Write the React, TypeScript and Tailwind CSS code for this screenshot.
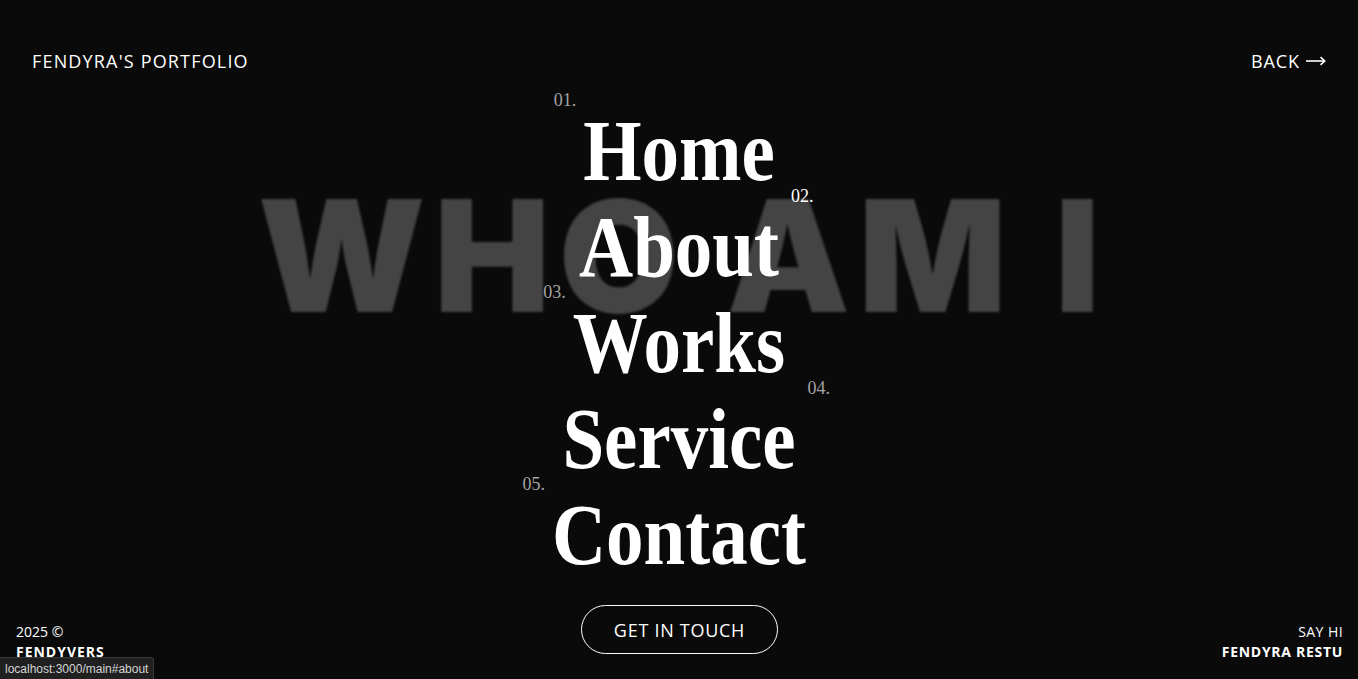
import React from 'react';

const links = [
  { n: '01.', label: 'Home', side: 'left' },
  { n: '02.', label: 'About', side: 'right', active: true },
  { n: '03.', label: 'Works', side: 'left' },
  { n: '04.', label: 'Service', side: 'right' },
  { n: '05.', label: 'Contact', side: 'left' },
];

export default function App() {
  return (
    <div className="relative flex h-screen w-full flex-col overflow-hidden bg-[#0a0a0a] text-white font-['Open_Sans',sans-serif]">
      {/* big backdrop word */}
      <div className="pointer-events-none absolute inset-x-0 top-[178px] select-none pl-[8px] text-center font-['Inter',sans-serif] text-[155px] font-black leading-none tracking-[0.055em] text-[#444444] blur-[1px]">
        WHO AM I
      </div>

      <header className="relative z-10 flex items-center justify-between px-8 pt-[49px] text-[18px] leading-6">
        <a href="#" className="tracking-[0.065em]">FENDYRA'S PORTFOLIO</a>
        <a href="#" className="flex items-center gap-[6px] tracking-[0.05em]">
          BACK
          <svg width="20" height="10" viewBox="0 0 20 10" fill="none" stroke="currentColor" strokeWidth="1.6">
            <path d="M0 5h18.5" />
            <path d="M14.5 1.2L18.7 5l-4.2 3.8" />
          </svg>
        </a>
      </header>

      <nav className="relative z-10 mt-[30px] flex flex-col items-center font-['Liberation_Serif',serif]">
        {links.map((l) => (
          <a
            key={l.label}
            href={'#' + l.label.toLowerCase()}
            className="relative inline-block h-[96px] leading-[96px]"
          >
            <span className="inline-block scale-y-[1.15] text-[75px] font-bold">{l.label}</span>
            <span
              className={
                'absolute top-[-13px] text-[18px] leading-[20px] ' +
                (l.side === 'left' ? 'right-full mr-[7px] ' : 'left-full ml-[12px] ') +
                (l.active ? 'text-white' : 'text-[#a3a3a3]')
              }
            >
              {l.n}
            </span>
          </a>
        ))}
      </nav>

      <footer className="relative z-10 mt-auto grid grid-cols-3 items-end pl-4 pr-[15px] pb-[17px] text-[14px] leading-5">
        <div className="justify-self-start">
          <div>2025 ©</div>
          <div className="font-bold tracking-[0.07em]">FENDYVERS</div>
        </div>
        <a
          href="#contact"
          className="mb-[8px] flex h-[49px] w-[197px] items-center justify-center justify-self-center rounded-full border border-white text-[18px] tracking-[0.04em]"
        >
          GET IN TOUCH
        </a>
        <div className="justify-self-end text-right">
          <div className="tracking-[0.03em]">SAY HI</div>
          <div className="font-bold tracking-[0.05em]">FENDYRA RESTU</div>
        </div>
      </footer>

      <div className="absolute bottom-0 left-0 z-20 flex h-[22px] items-center rounded-tr-[4px] border-t border-r border-[#3a3a3a] bg-[#202020] px-[5px] font-['Liberation_Sans',sans-serif] text-[12px] text-[#d4d4d4]">
        localhost:3000/main#about
      </div>
    </div>
  );
}
